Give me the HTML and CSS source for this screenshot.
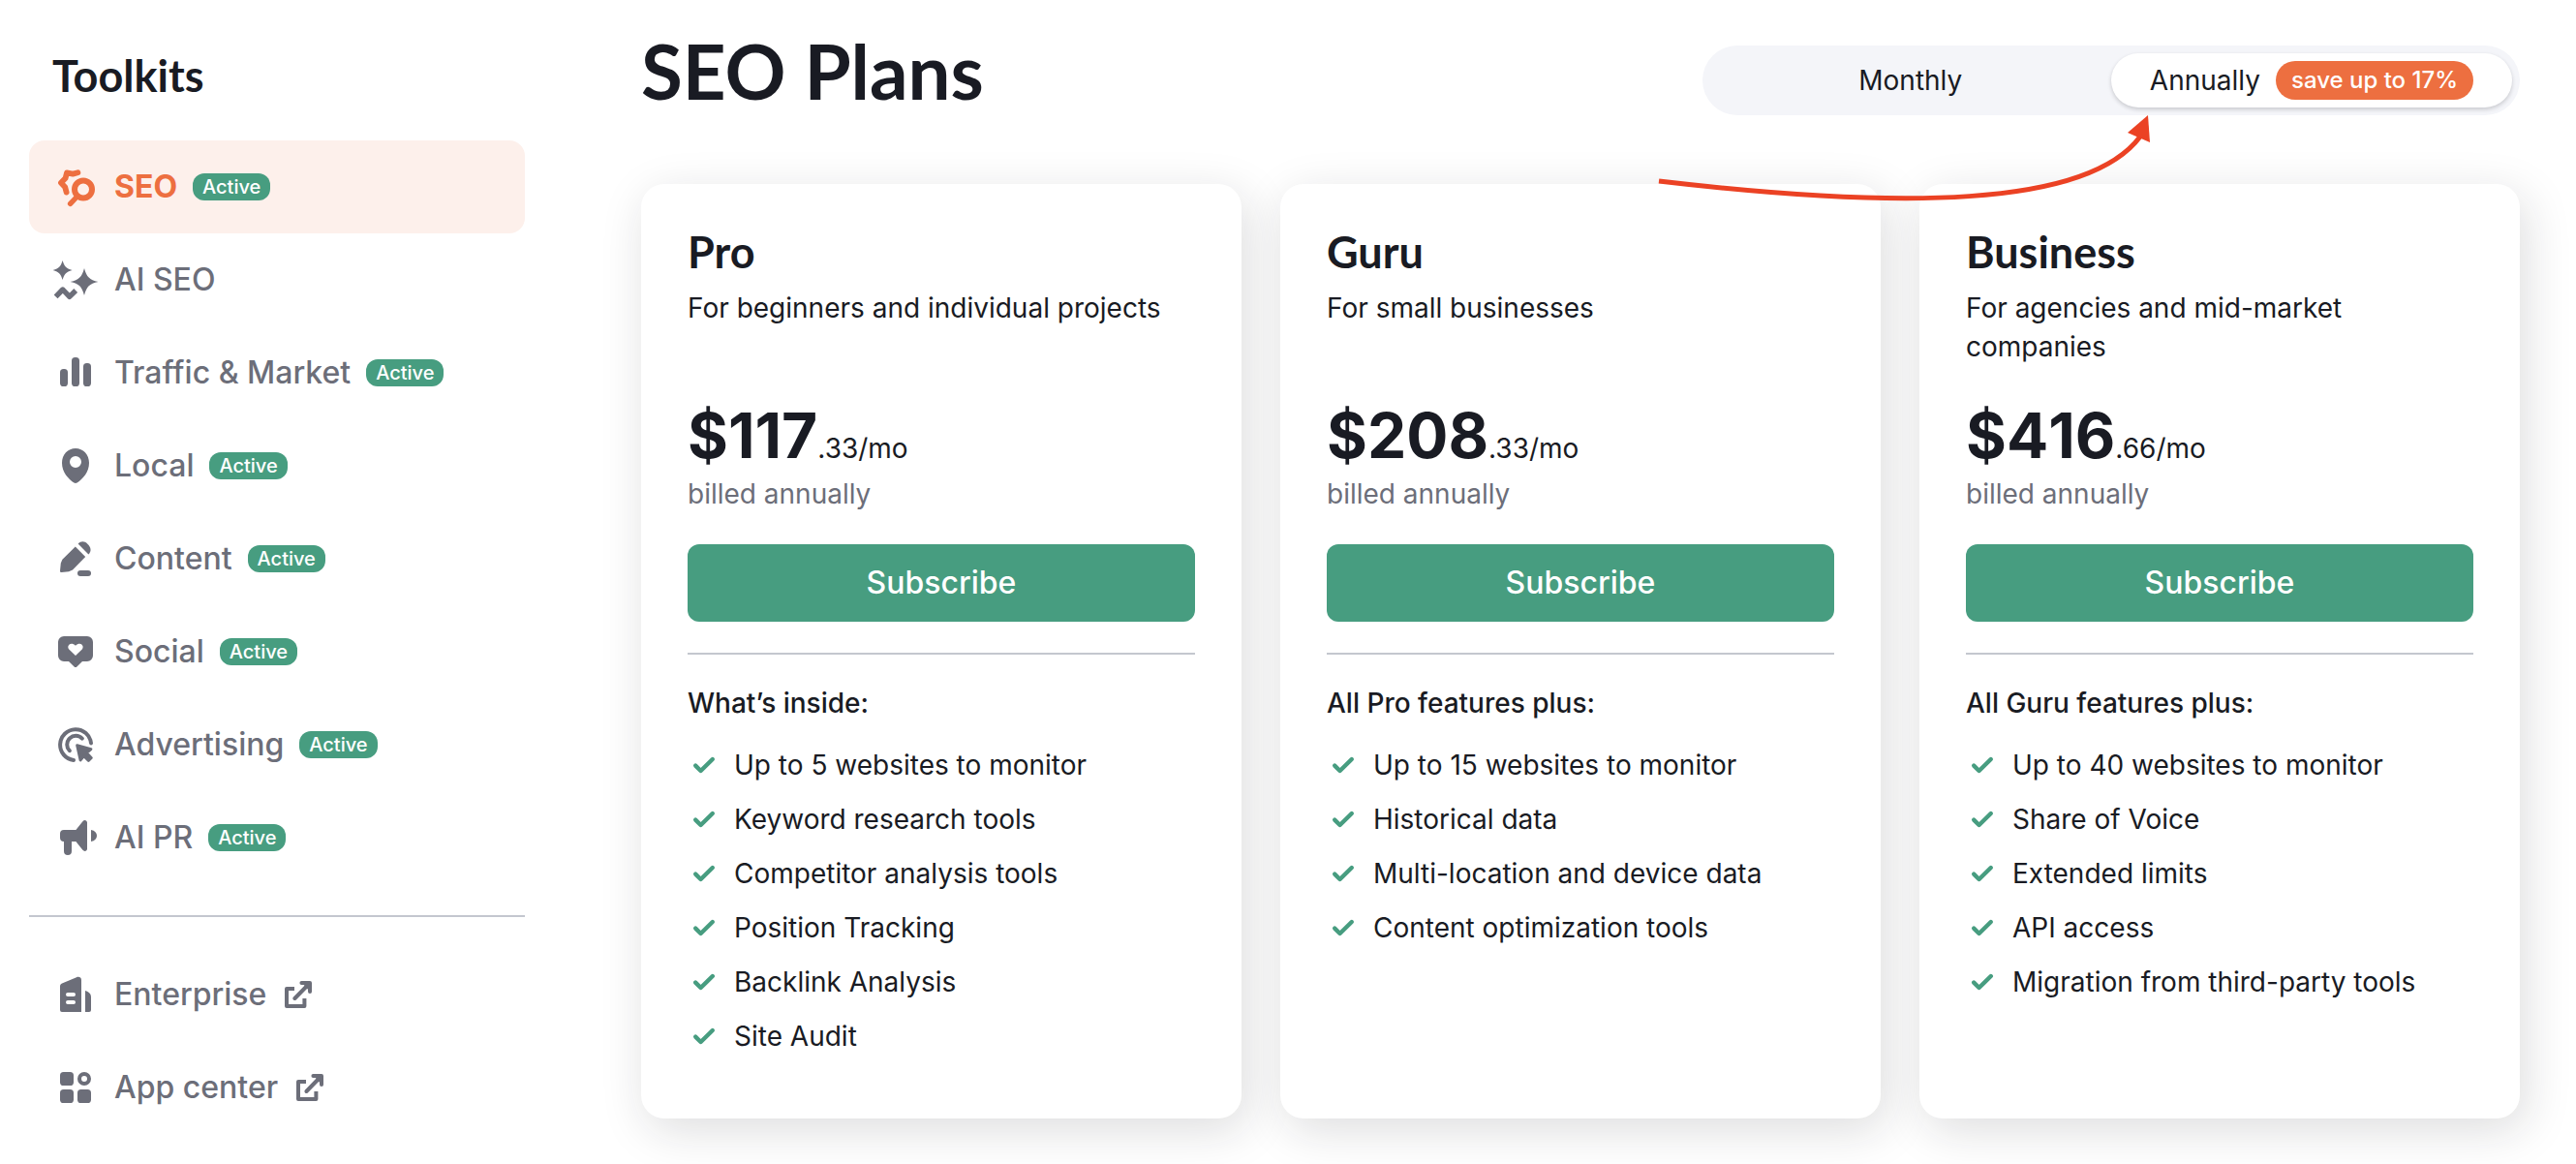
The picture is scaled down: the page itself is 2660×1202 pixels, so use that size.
FILE: index.html
```html
<!DOCTYPE html>
<html lang="en">
<head>
<meta charset="utf-8">
<title>SEO Plans</title>
<meta name="viewport" content="width=device-width, initial-scale=1">
<link rel="stylesheet" href="styles.css">
</head>
<body>
<svg class="sprite" aria-hidden="true">
  <symbol id="check" viewBox="0 0 16 16"><path d="M4.100 8.300 6.800 11 12.900 5" fill="none" stroke="currentColor" stroke-width="2.200" stroke-linecap="round" stroke-linejoin="round"/></symbol>
  <symbol id="external" viewBox="0 0 16 16"><path d="M6.500 5h-4v9h9.200v-4" fill="none" stroke="currentColor" stroke-width="2" stroke-linejoin="round"/><path d="M6.700 10 13.500 3M10.200 2h4.300v4.500" fill="none" stroke="currentColor" stroke-width="2" stroke-linecap="round" stroke-linejoin="round"/><path d="M10.500 2h4v4.500z" fill="currentColor"/></symbol>
</svg>
<div class="page">
  <aside class="sidebar">
    <h2 class="sidebar-title">Toolkits</h2>
    <nav class="nav" aria-label="Toolkits">
      <a class="nav-item is-current" href="#seo" aria-current="page">
        <svg class="icon" viewBox="0 0 24 24" aria-hidden="true" fill="none" stroke="currentColor" stroke-linecap="round" stroke-linejoin="round"><circle cx="16" cy="13.300" r="4.500" stroke-width="3"/><path d="m12.800 17-3.500 3.700" stroke-width="2.700"/><path d="M13.200 4.600 10.600 5.300 7.500 4.700 6.800 7.500 4.500 9.900 6.600 12.100 7.300 14.800" stroke-width="2.900"/></svg>
        <span class="label">SEO</span><span class="badge">Active</span>
      </a>
      <a class="nav-item" href="#ai-seo">
        <svg class="icon" viewBox="0 0 24 24" aria-hidden="true" fill="currentColor"><path d="M5.300 2C6.200 5 7 6 10.300 7 7 8 6.200 9 5.300 12 4.400 9 3.600 8 .3 7 3.600 6 4.400 5 5.300 2z"/><path d="M16.500 6c1.300 4.600 2.600 5.900 7.200 7-4.600 1.100-5.900 2.400-7.200 7-1.300-4.600-2.600-5.900-7.200-7 4.600-1.100 5.900-2.400 7.200-7z"/><path d="m1.800 20.700 3.600-3.700 3.500 3.700 3.200-3.200" fill="none" stroke="currentColor" stroke-width="2.700" stroke-linejoin="round"/></svg>
        <span class="label">AI SEO</span>
      </a>
      <a class="nav-item" href="#traffic">
        <svg class="icon" viewBox="0 0 24 24" aria-hidden="true" fill="currentColor"><rect x="4" y="10" width="4" height="9" rx="1.800"/><rect x="10" y="4" width="4" height="15" rx="1.800"/><rect x="16" y="7" width="4" height="12" rx="1.800"/></svg>
        <span class="label">Traffic &amp; Market</span><span class="badge">Active</span>
      </a>
      <a class="nav-item" href="#local">
        <svg class="icon" viewBox="0 0 24 24" aria-hidden="true" fill="currentColor"><path fill-rule="evenodd" d="M12 3c-4 0-7 3.300-7 7.500 0 4.800 3.300 8.300 6.200 10.300.5.300 1.100.3 1.600 0C15.700 18.800 19 15.300 19 10.500 19 6.300 16 3 12 3zm0 4a3 3 0 1 1 0 6 3 3 0 0 1 0-6z"/></svg>
        <span class="label">Local</span><span class="badge">Active</span>
      </a>
      <a class="nav-item" href="#content">
        <svg class="icon" viewBox="0 0 24 24" aria-hidden="true" fill="currentColor"><path d="M11.900 5.700 17.100 11l-6.600 6.700-2 .9-3.800.4a.7.7 0 0 1-.7-.8l.4-4 .8-1.800z"/><path d="M13.300 4.300c1.500-1.500 3.300-1.500 4.900.1 1.800 1.800 2.200 3.700.5 5.300z"/><rect x="13" y="18" width="7" height="3" rx="1.500"/></svg>
        <span class="label">Content</span><span class="badge">Active</span>
      </a>
      <a class="nav-item" href="#social">
        <svg class="icon" viewBox="0 0 24 24" aria-hidden="true" fill="currentColor"><path fill-rule="evenodd" d="M6 4h12a3 3 0 0 1 3 3v7a3 3 0 0 1-3 3h-2.500l-2.800 2.700a1 1 0 0 1-1.400 0L8.500 17H6a3 3 0 0 1-3-3V7a3 3 0 0 1 3-3zm6 10 3.400-3.200c1.400-1.700-.9-4.300-3.400-1.900-2.500-2.400-4.800.2-3.400 1.900z"/></svg>
        <span class="label">Social</span><span class="badge">Active</span>
      </a>
      <a class="nav-item" href="#advertising">
        <svg class="icon" viewBox="0 0 24 24" aria-hidden="true" fill="none" stroke="currentColor" stroke-linecap="round" stroke-width="2"><path d="M20 11.200A8 8 0 1 0 11 20"/><path d="M15.400 8.800A4.200 4.200 0 1 0 8.900 15.100"/><path d="M12.800 12.300 20 14.300 17.800 16.200 20.200 18.800 18.700 20.300 16.300 17.900 14.500 20z" fill="currentColor" stroke-width="1.400" stroke-linejoin="round"/></svg>
        <span class="label">Advertising</span><span class="badge">Active</span>
      </a>
      <a class="nav-item" href="#ai-pr">
        <svg class="icon" viewBox="0 0 24 24" aria-hidden="true" fill="currentColor"><path d="M6 8h6.200l3.500-4.400C16.500 2.600 18 3 18 4.300v13.400c0 1.300-1.500 1.700-2.300.7L12.200 14H10v5a2 2 0 0 1-4 0v-5a2 2 0 0 1-2-2v-2a2 2 0 0 1 2-2z"/><path d="M20 8c4 .5 4 5.500 0 6z"/></svg>
        <span class="label">AI PR</span><span class="badge">Active</span>
      </a>
    </nav>
    <hr class="rule sidebar-rule">
    <nav class="nav" aria-label="More">
      <a class="nav-item" href="#enterprise">
        <svg class="icon" viewBox="0 0 24 24" aria-hidden="true" fill="currentColor"><path fill-rule="evenodd" d="M5 6.200 12.500 3.100c1.200-.5 2.500 0 2.500 1.400V21H5a1 1 0 0 1-1-1V7.700c0-.7.400-1.200 1-1.500zM8 11a1 1 0 0 0 0 2h3a1 1 0 0 0 0-2zm0 4a1 1 0 0 0 0 2h3a1 1 0 0 0 0-2z"/><path d="M17 10c1.800.5 3 1.700 3 3.300V20a1 1 0 0 1-1 1h-2z"/></svg>
        <span class="label">Enterprise</span><svg class="icon-small" aria-hidden="true"><use href="#external"/></svg>
      </a>
      <a class="nav-item" href="#app-center">
        <svg class="icon" viewBox="0 0 24 24" aria-hidden="true" fill="currentColor"><rect x="4" y="4" width="7" height="7" rx="1.800"/><rect x="4" y="13" width="7" height="7" rx="1.800"/><rect x="13" y="13" width="7" height="7" rx="1.800"/><circle cx="16.500" cy="7.500" r="2.500" fill="none" stroke="currentColor" stroke-width="2"/></svg>
        <span class="label">App center</span><svg class="icon-small" aria-hidden="true"><use href="#external"/></svg>
      </a>
    </nav>
  </aside>

  <main class="main">
    <header class="header">
      <h1 class="page-title">SEO Plans</h1>
      <div class="toggle" role="radiogroup" aria-label="Billing period">
        <label class="option"><input class="option-input" type="radio" name="period" value="monthly">Monthly</label>
        <label class="option"><input class="option-input" type="radio" name="period" value="annually" checked>Annually <span class="saving">save up to 17%</span></label>
      </div>
      <svg class="arrow" viewBox="0 0 540 110" aria-hidden="true"><path d="M13 77C260 106 455 105 510 31" fill="none" stroke="#eb4224" stroke-width="5"/><path d="M518 9 497 27 520 37z" fill="#eb4224"/></svg>
    </header>

    <div class="plans">
      <section class="plan">
        <h2 class="plan-name">Pro</h2>
        <p class="plan-about">For beginners and individual projects</p>
        <p class="price"><strong class="amount">$117</strong>.33/mo</p>
        <p class="billing">billed annually</p>
        <button class="subscribe" type="button">Subscribe</button>
        <hr class="rule">
        <h3 class="features-title">What’s inside:</h3>
        <ul class="features">
          <li class="feature"><svg class="check" aria-hidden="true"><use href="#check"/></svg>Up to 5 websites to monitor</li>
          <li class="feature"><svg class="check" aria-hidden="true"><use href="#check"/></svg>Keyword research tools</li>
          <li class="feature"><svg class="check" aria-hidden="true"><use href="#check"/></svg>Competitor analysis tools</li>
          <li class="feature"><svg class="check" aria-hidden="true"><use href="#check"/></svg>Position Tracking</li>
          <li class="feature"><svg class="check" aria-hidden="true"><use href="#check"/></svg>Backlink Analysis</li>
          <li class="feature"><svg class="check" aria-hidden="true"><use href="#check"/></svg>Site Audit</li>
        </ul>
      </section>
      <section class="plan">
        <h2 class="plan-name">Guru</h2>
        <p class="plan-about">For small businesses</p>
        <p class="price"><strong class="amount">$208</strong>.33/mo</p>
        <p class="billing">billed annually</p>
        <button class="subscribe" type="button">Subscribe</button>
        <hr class="rule">
        <h3 class="features-title">All Pro features plus:</h3>
        <ul class="features">
          <li class="feature"><svg class="check" aria-hidden="true"><use href="#check"/></svg>Up to 15 websites to monitor</li>
          <li class="feature"><svg class="check" aria-hidden="true"><use href="#check"/></svg>Historical data</li>
          <li class="feature"><svg class="check" aria-hidden="true"><use href="#check"/></svg>Multi-location and device data</li>
          <li class="feature"><svg class="check" aria-hidden="true"><use href="#check"/></svg>Content optimization tools</li>
        </ul>
      </section>
      <section class="plan">
        <h2 class="plan-name">Business</h2>
        <p class="plan-about">For agencies and mid-market companies</p>
        <p class="price"><strong class="amount">$416</strong>.66/mo</p>
        <p class="billing">billed annually</p>
        <button class="subscribe" type="button">Subscribe</button>
        <hr class="rule">
        <h3 class="features-title">All Guru features plus:</h3>
        <ul class="features">
          <li class="feature"><svg class="check" aria-hidden="true"><use href="#check"/></svg>Up to 40 websites to monitor</li>
          <li class="feature"><svg class="check" aria-hidden="true"><use href="#check"/></svg>Share of Voice</li>
          <li class="feature"><svg class="check" aria-hidden="true"><use href="#check"/></svg>Extended limits</li>
          <li class="feature"><svg class="check" aria-hidden="true"><use href="#check"/></svg>API access</li>
          <li class="feature"><svg class="check" aria-hidden="true"><use href="#check"/></svg>Migration from third-party tools</li>
        </ul>
      </section>
    </div>
  </main>
</div>
</body>
</html>
```
FILE: styles.css
```css
:root {
  --ink: #191b23;
  --muted: #6c6e79;
  --green: #479d80;
  --orange: #ed6f40;
  --line: #c4c7cf;
}

* {
  box-sizing: border-box;
}

body,
h1,
h2,
h3,
p,
ul {
  margin: 0;
  padding: 0;
}

body {
  background: #fff;
  color: var(--ink);
  font-family: Inter, "Liberation Sans", sans-serif;
  font-size: 28px;
  line-height: 40px;
}

.sprite {
  display: none;
}

.page {
  display: grid;
  grid-template-columns: 512px 1fr;
  gap: 120px;
  padding: 0 58px 0 30px;
}

/* Sidebar */

.sidebar {
  padding-top: 56px;
}

.sidebar-title,
.plan-name {
  font-family: Lato, sans-serif;
  font-size: 45px;
  line-height: 44px;
  font-weight: 700;
}

.sidebar-title {
  padding-left: 24px;
  margin-bottom: 45px;
}

.nav-item {
  display: flex;
  align-items: center;
  gap: 16px;
  height: 96px;
  padding: 0 24px;
  border-radius: 16px;
  color: var(--muted);
  font-size: 32px;
  font-weight: 500;
  text-decoration: none;
}

.is-current {
  background: #fdf0eb;
  color: var(--orange);
  font-weight: 700;
}

.icon {
  width: 48px;
  height: 48px;
}

.icon-small {
  width: 32px;
  height: 32px;
}

.badge {
  padding: 0 10px;
  border-radius: 12px;
  background: var(--green);
  color: #fff;
  font-size: 20px;
  line-height: 28px;
  font-weight: 500;
}

.rule {
  height: 2px;
  margin: 32px 0;
  border: 0;
  background: var(--line);
}

/* Header */

.main {
  padding: 33px 0 47px;
}

.header {
  position: relative;
  display: flex;
  align-items: flex-end;
  justify-content: space-between;
  margin-bottom: 71px;
}

.page-title {
  margin-bottom: 6px;
  font-family: Lato, sans-serif;
  font-size: 78px;
  line-height: 80px;
  font-weight: 700;
}

.toggle {
  display: grid;
  grid-template-columns: 1fr 1fr;
  padding: 8px;
  border-radius: 36px;
  background: #f4f5f9;
}

.option {
  display: flex;
  align-items: center;
  justify-content: center;
  gap: 16px;
  height: 56px;
  padding: 0 40px;
  border-radius: 28px;
  white-space: nowrap;
  cursor: pointer;
}

.option:has(:checked) {
  background: #fff;
  box-shadow: 0 2px 4px rgba(25, 27, 35, 0.2);
}

.option-input {
  position: absolute;
  opacity: 0;
  pointer-events: none;
}

.saving {
  padding: 0 16px;
  border-radius: 20px;
  background: var(--orange);
  color: #fff;
  font-size: 24px;
  line-height: 40px;
  font-weight: 500;
}

.arrow {
  position: absolute;
  z-index: 1;
  top: 77px;
  right: 362px;
  width: 540px;
  height: 110px;
  pointer-events: none;
}

/* Plans */

.plans {
  display: grid;
  grid-template-columns: repeat(3, 1fr);
  gap: 40px;
}

.plan {
  padding: 48px 48px 57px;
  border-radius: 24px;
  background: #fff;
  box-shadow: 6px 12px 48px rgba(25, 27, 35, 0.15);
}

.plan-name {
  margin-bottom: 16px;
}

.plan-about {
  min-height: 80px;
}

.price {
  margin: 36px 0 4px;
}

.amount {
  font-size: 64px;
  line-height: 72px;
  font-weight: 700;
  font-kerning: none;
}

.billing {
  color: var(--muted);
}

.subscribe {
  display: block;
  width: 100%;
  height: 80px;
  margin-top: 32px;
  border: 0;
  border-radius: 12px;
  background: var(--green);
  color: #fff;
  font: 500 32px/40px Inter, "Liberation Sans", sans-serif;
  cursor: pointer;
}

.plan .rule {
  margin-bottom: 30px;
}

.features-title {
  margin-bottom: 16px;
  font-size: 28px;
  line-height: 40px;
  font-weight: 500;
}

.features {
  list-style: none;
}

.feature {
  display: flex;
  align-items: center;
  gap: 16px;
  padding: 8px 0;
}

.check {
  width: 32px;
  height: 32px;
  color: var(--green);
}
```
